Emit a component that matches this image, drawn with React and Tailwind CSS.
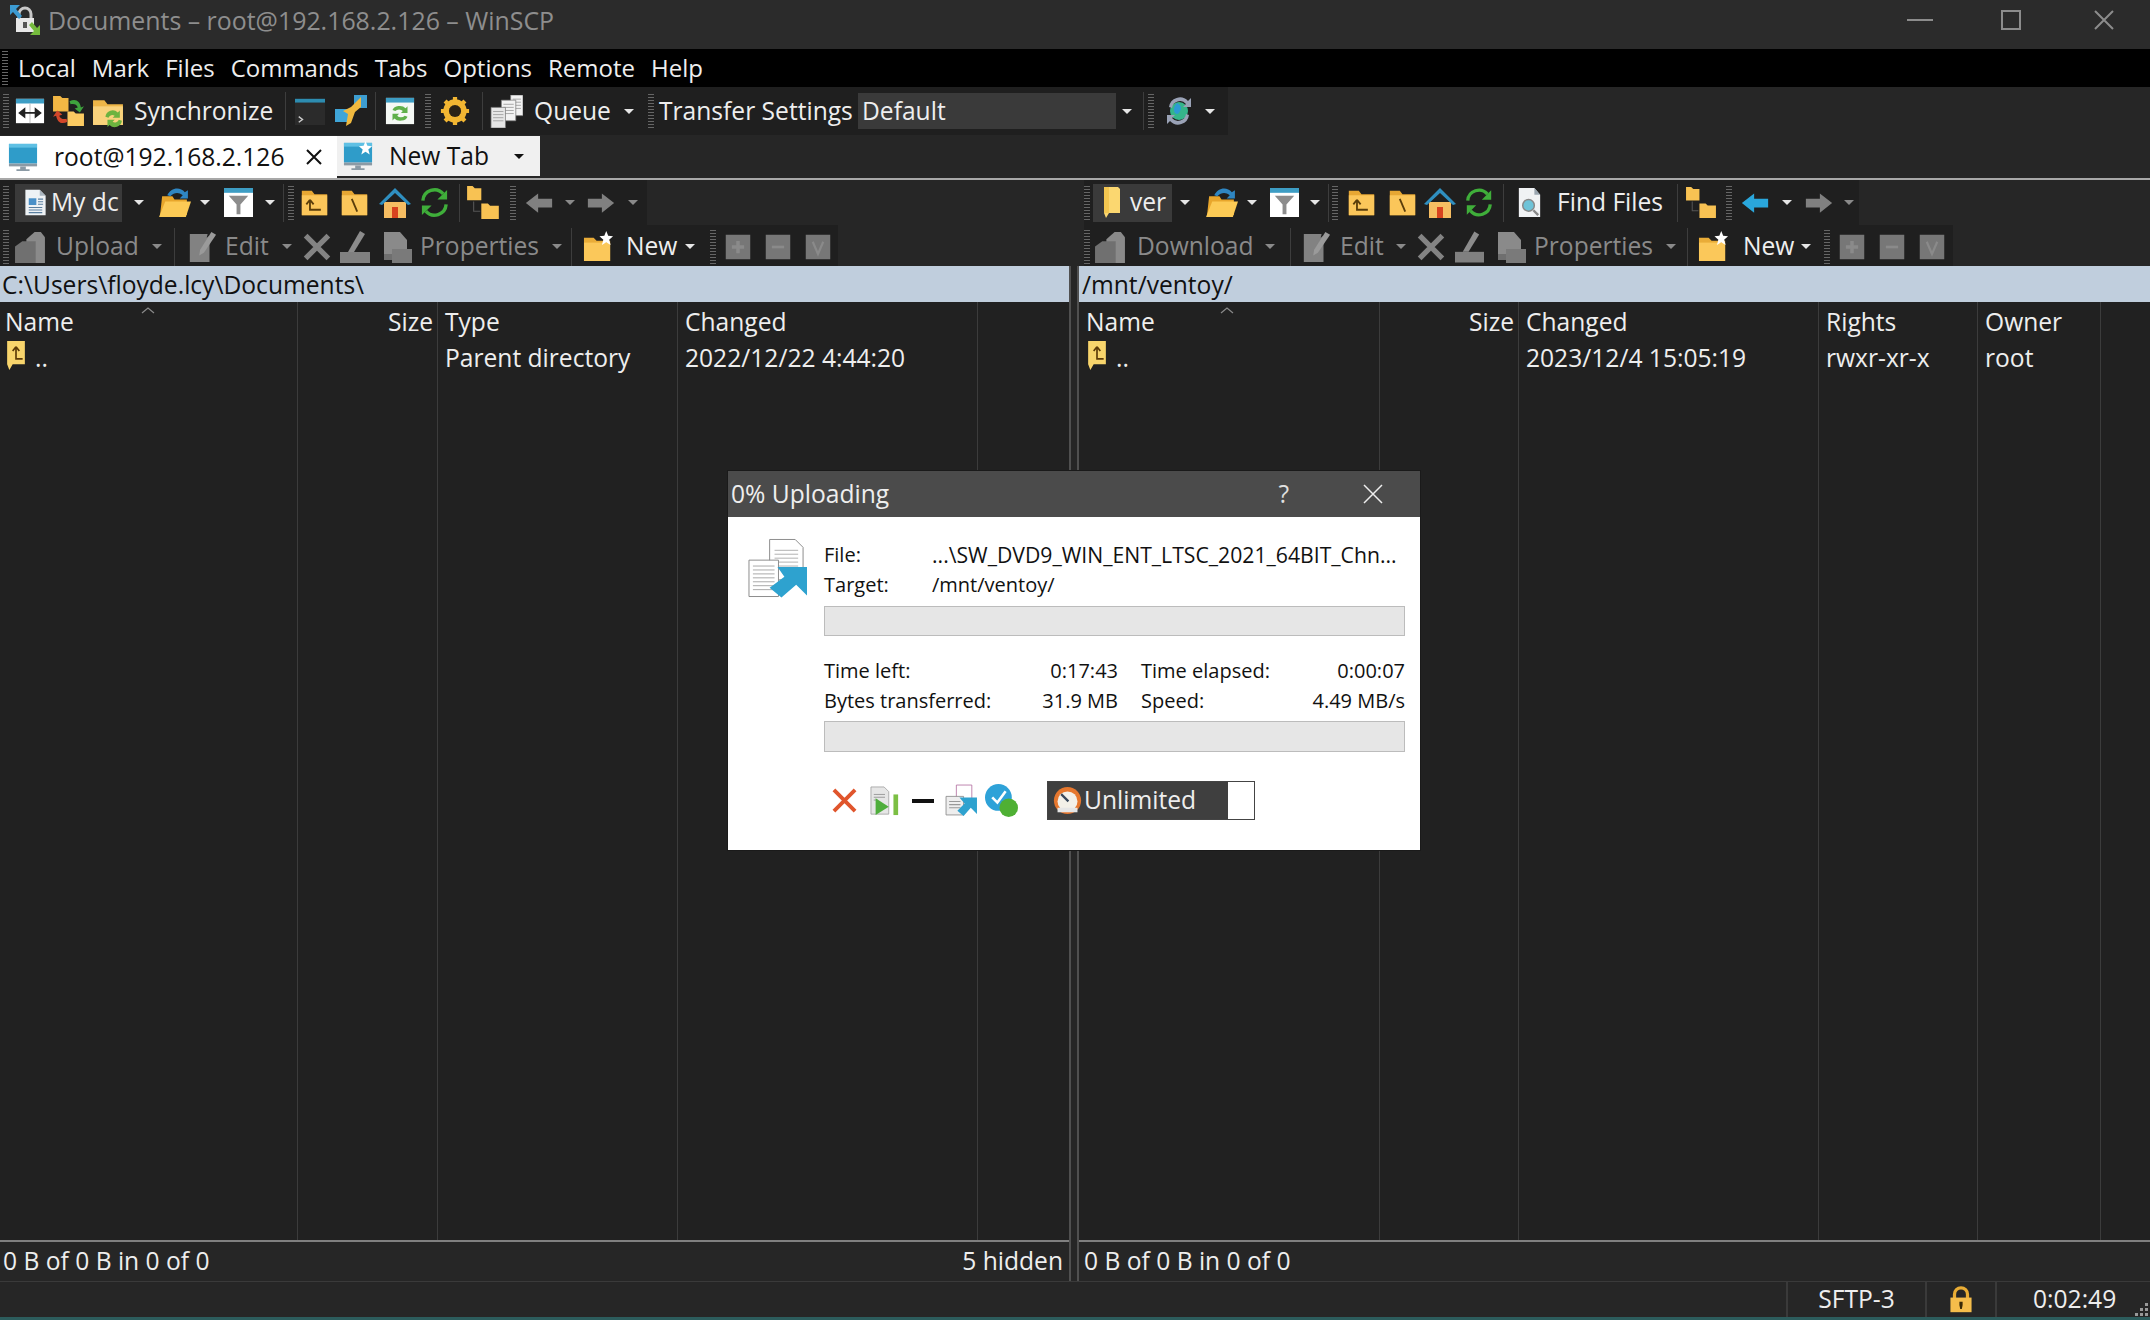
import React from "react";

const Svg = ({ className = "", children }) => (
  <svg viewBox="0 0 32 32" className={`shrink-0 ${className}`}>{children}</svg>
);

const CompareIcon = ({ className }) => (
  <Svg className={className}>
    <path d="M1 3h30v26H1z" fill="#fff" />
    <path d="M1 3h30v5H1z" fill="#3d9dc4" />
    <path d="M16 8v21" stroke="#bbb" />
    <path d="M5 18h22M5 18l5-4v8zM27 18l-5-4v8z" stroke="#222" strokeWidth="2" fill="#222" />
  </Svg>
);

const SyncFoldersIcon = ({ className }) => (
  <Svg className={className}>
    <path d="M1 1h7l2 2h6v13H1z" fill="#f2b744" />
    <path d="M15 16h6l2 2h8v12H15z" fill="#fbcb62" />
    <path d="M17 6c6-3 10 0 11 6l3-1-4 6-5-4 3-1c-1-3-4-4-7-3z" fill="#3ea33d" />
    <path d="M15 26c-6 3-10 0-11-6l-3 1 4-6 5 4-3 1c1 3 4 4 7 3z" fill="#d2472a" />
  </Svg>
);

const FolderSyncIcon = ({ className }) => (
  <Svg className={className}>
    <path d="M1 5h11l3 4h15v20H1z" fill="#eeb648" />
    <path d="M1 11h29v18H1z" fill="#f9d27c" />
    <path d="M13 21a7 7 0 0 1 12-4l2-2v7h-7l2-2a4 4 0 0 0-6 2zM29 25a7 7 0 0 1-12 4l-2 2v-7h7l-2 2a4 4 0 0 0 6-2z" fill="#6cb33f" />
  </Svg>
);

const TerminalIcon = ({ className }) => (
  <Svg className={className}>
    <path d="M0 3h32v28H0z" fill="#2b2b2b" />
    <path d="M0 3h32v4H0z" fill="#2d8cb0" />
    <path d="M4 22l4 3-4 3" stroke="#ccc" strokeWidth="1.5" fill="none" />
  </Svg>
);

const PuttyIcon = ({ className }) => (
  <Svg className={className}>
    <path d="M19 0h13v13H19z" fill="#3d9dd0" />
    <path d="M0 14h14v13H0z" fill="#3fa5d8" />
    <path d="M26 2L16 12l-8 4 5 3-2 12 5-3 4-11 6-5z" fill="#f0b93f" />
  </Svg>
);

const RefreshWinIcon = ({ className }) => (
  <Svg className={className}>
    <path d="M1 2h30v28H1z" fill="#f4f8f4" />
    <path d="M1 2h30v5H1z" fill="#3d9dc4" />
    <path d="M8 15a8 6 0 0 1 14-2l2-2v7h-7l2-2a5 4 0 0 0-8 0zM24 22a8 6 0 0 1-14 2l-2 2v-7h7l-2 2a5 4 0 0 0 8 0z" fill="#5fb04a" />
  </Svg>
);

const GearIcon = ({ className }) => (
  <Svg className={className}>
    <path d="M16 1v30M1 16h30M5.400 5.400l21.200 21.200M26.600 5.400L5.400 26.600" stroke="#f2b632" strokeWidth="4.500" />
    <circle cx="16" cy="16" r="9.500" fill="none" stroke="#f2b632" strokeWidth="6" />
    <circle cx="16" cy="16" r="6.500" fill="#2a2216" />
  </Svg>
);

const Page = ({ x, y, w, h, fill = "#f2f2f2" }) => (
  <g>
    <path d={`M${x} ${y}h${w}v${h}h${-w}z`} fill={fill} stroke="#777" strokeWidth=".7" />
    <path d={`M${x + 2} ${y + 4}h${w - 4}M${x + 2} ${y + 7}h${w - 4}M${x + 2} ${y + 10}h${w - 4}M${x + 2} ${y + 13}h${w - 4}`} stroke="#999" strokeWidth=".8" />
  </g>
);

const QueueIcon = ({ className }) => (
  <Svg className={className}>
    <Page x={20} y={0} w={12} h={20} />
    <Page x={11} y={5} w={14} h={20} />
    <Page x={1} y={12} w={14} h={20} fill="#e6e6e6" />
  </Svg>
);

const GlobeIcon = ({ className }) => (
  <Svg className={className}>
    <circle cx="16" cy="16" r="9" fill="#35b58a" />
    <path d="M14 8c4 2 5 5 3 8-1 3-3 4-5 2-2-3-1-7 2-10z" fill="#2d9ad4" />
    <path d="M6 12A11 11 0 0 1 25 6l3-3v9h-8l3-3A8 8 0 0 0 9 13z" fill="#9aa2b6" />
    <path d="M26 20A11 11 0 0 1 7 26l-3 3v-9h8l-3 3a8 8 0 0 0 14-4z" fill="#9aa2b6" />
  </Svg>
);

const MonitorIcon = ({ className, star }) => (
  <Svg className={className}>
    <path d="M1 2h30v21H1z" fill="#2f9cc9" />
    <path d="M1 2h30v4H1z" fill="#5fc0e4" />
    <path d="M1 23h30v3H1z" fill="#8b9aa5" />
    <path d="M13 26h6v3h4v2H9v-2h4z" fill="#8b9aa5" />
    {star && <path d="M24 0l2 5 5 .5-4 3.500 1.500 5.500L24 11.500 19.500 14.500 21 9l-4-3.500 5-.5z" fill="#fff" />}
  </Svg>
);

const DocIcon = ({ className }) => (
  <Svg className={className}>
    <path d="M4 1h17l7 7v23H4z" fill="#eef2f5" />
    <path d="M21 1l7 7h-7z" fill="#aab6c0" />
    <path d="M8 11h9v8H8z" fill="#4a90c8" />
    <path d="M8 22h16M8 25h16M8 28h16M19 12h6M19 15h6M19 18h6" stroke="#5a7fa0" strokeWidth="1.2" />
  </Svg>
);

const FolderOpenIcon = ({ className }) => (
  <Svg className={className}>
    <path d="M4 10h10l2 3h12v15H2z" fill="#e8a62c" />
    <path d="M7 15h25l-5 15H1z" fill="#fcca55" />
    <path d="M9 9c3-7 12-9 17-3l3-2v8h-8l3-3c-4-3-8-3-12 1z" fill="#2f86c2" />
  </Svg>
);

const FilterIcon = ({ className }) => (
  <Svg className={className}>
    <path d="M1 1h30v30H1z" fill="#fff" />
    <path d="M1 1h30v5H1z" fill="#3d9dc4" />
    <path d="M6 9h20l-8 9v10h-4V18z" fill="#8c8c8c" />
  </Svg>
);

const FolderUpIcon = ({ className }) => (
  <Svg className={className}>
    <path d="M2 3h11l3 4h14v23H2z" fill="#e7a733" />
    <path d="M2 8h28v22H2z" fill="#fbc65a" />
    <path d="M11 13v11h12M11 13l-4 5M11 13l4 5" stroke="#5a3d0a" strokeWidth="2" fill="none" />
  </Svg>
);

const FolderRootIcon = ({ className }) => (
  <Svg className={className}>
    <path d="M2 3h11l3 4h14v23H2z" fill="#e7a733" />
    <path d="M2 8h28v22H2z" fill="#fbc65a" />
    <path d="M13 12l6 14" stroke="#5a3d0a" strokeWidth="2" />
  </Svg>
);

const HomeIcon = ({ className }) => (
  <Svg className={className}>
    <path d="M5 15h22v16H5z" fill="#f6bd62" />
    <path d="M16 1L0 17l3 1L16 6l13 12 3-1z" fill="#2f8fc0" />
    <path d="M13 20h6v11h-6z" fill="#d8421f" />
  </Svg>
);

const RefreshIcon = ({ className }) => (
  <Svg className={className}>
    <path d="M4 14A12 12 0 0 1 25 7" stroke="#3fae3a" strokeWidth="3.500" fill="none" />
    <path d="M28 18A12 12 0 0 1 7 25" stroke="#3fae3a" strokeWidth="3.500" fill="none" />
    <path d="M29 3v10H19zM3 29V19h10z" fill="#3fae3a" />
  </Svg>
);

const TreeIcon = ({ className }) => (
  <Svg className={className}>
    <path d="M1 1h5l2 2h6v11H1z" fill="#f8c253" />
    <path d="M14 17h6l2 2h8v12H14z" fill="#f8c253" />
    <path d="M7 15v9h6" stroke="#555" strokeWidth="1" fill="none" />
  </Svg>
);

const ArrowLeft = ({ className, fill = "#808080" }) => (
  <Svg className={className}>
    <path d="M1 16L15 5v6h16v10H15v6z" fill={fill} />
  </Svg>
);

const ArrowRight = ({ className, fill = "#808080" }) => (
  <Svg className={className}>
    <path d="M31 16L17 5v6H1v10h16v6z" fill={fill} />
  </Svg>
);

const CopyGrayIcon = ({ className }) => (
  <Svg className={className}>
    <path d="M12 9l8-7h6l4 5v25H12z" fill="#8a8a8a" />
    <path d="M1 16l7-5h13v21H1z" fill="#707070" />
  </Svg>
);

const EditGrayIcon = ({ className }) => (
  <Svg className={className}>
    <path d="M3 2h19l-1 4 3-2v28H3z" fill="#828282" />
    <path d="M26 0l5 3-13 19-5 3 1-6z" fill="#9a9a9a" />
  </Svg>
);

const DeleteGrayIcon = ({ className }) => (
  <Svg className={className}>
    <path d="M3 3l26 26M29 3L3 29" stroke="#838383" strokeWidth="6" />
  </Svg>
);

const RenameGrayIcon = ({ className }) => (
  <Svg className={className}>
    <path d="M1 21h30v11H1z" fill="#808080" />
    <path d="M21 0l5 3-11 18h-6z" fill="#8c8c8c" />
  </Svg>
);

const PropsGrayIcon = ({ className }) => (
  <Svg className={className}>
    <path d="M2 1h16l7 8v14H2z" fill="#8a8a8a" />
    <path d="M10 18h20v14H10z" fill="#7a7a7a" />
    <path d="M2 23h8v6H2z" fill="#6f6f6f" />
  </Svg>
);

const NewFolderIcon = ({ className }) => (
  <Svg className={className}>
    <path d="M1 7h10l3 3h14v21H1z" fill="#e9ac38" />
    <path d="M1 12h27v19H1z" fill="#fbc85a" />
    <path d="M24 0l2 5 5 .5-4 3.500 1.500 5.500L24 11.500 19.500 14.500 21 9l-4-3.500 5-.5z" fill="#fff" />
  </Svg>
);

const SquareGray = ({ className, mark }) => (
  <Svg className={className}>
    <path d="M2 2h28v28H2z" fill="#777" />
    {mark === "plus" && <path d="M16 9v14M9 16h14" stroke="#8a8a8a" strokeWidth="4" />}
    {mark === "minus" && <path d="M9 16h14" stroke="#8a8a8a" strokeWidth="3" />}
    {mark === "check" && <path d="M10 10l6 14 6-14" stroke="#8a8a8a" strokeWidth="2.500" fill="none" />}
  </Svg>
);

const ShortcutFolder = ({ className }) => (
  <svg viewBox="0 0 22 32" className={`shrink-0 ${className}`}>
    <path d="M2 0h14l2 2v24H7l-3 5-2-5z" fill="#fbd770" />
    <path d="M2 0h5v26H2z" fill="#f3c650" />
  </svg>
);

const ParentIcon = ({ className }) => (
  <svg viewBox="0 0 18 28" className={`shrink-0 ${className}`}>
    <path d="M1 1h16v21H6l-3 5-2-5z" fill="#f8d56c" />
    <path d="M9 6v11h6M9 6L6 10M9 6l3 4" stroke="#5b3a08" strokeWidth="1.500" fill="none" />
  </svg>
);

const FindIcon = ({ className }) => (
  <Svg className={className}>
    <path d="M5 1h16l6 7v23H5z" fill="#f0f2f4" />
    <path d="M21 1l6 7h-6z" fill="#9aa6b0" />
    <circle cx="15" cy="19" r="6" fill="#6ec3d8" stroke="#888" strokeWidth="1.500" />
    <path d="M20 24l5 5" stroke="#888" strokeWidth="2.500" />
  </Svg>
);

const TransferIcon = ({ className }) => (
  <svg viewBox="0 0 60 60" className={`shrink-0 ${className}`}>
    <path d="M22 1h26l8 8v33H22z" fill="#fff" stroke="#8c8c8c" />
    <path d="M27 12h24M27 16h24M27 20h24M27 24h24M27 28h24" stroke="#b0b0b0" />
    <path d="M1 22h30v37H1z" fill="#fff" stroke="#8c8c8c" />
    <path d="M5 28h22M5 32h22M5 36h22M5 40h22M5 44h22M5 48h22M5 52h22" stroke="#a8a8a8" />
    <path d="M30 29h30v29L49 47 34 60 22 50 37 39z" fill="#2ea2cf" />
  </svg>
);

const PlayDocIcon = ({ className }) => (
  <Svg className={className}>
    <path d="M1 1h14l5 5v24H1z" fill="#e6e6e6" stroke="#999" strokeWidth=".8" />
    <path d="M4 9h12M4 12h12M4 15h4" stroke="#999" />
    <path d="M6 13l14 9-14 9z" fill="#4fae3c" />
    <path d="M25 9h5v22h-5z" fill="#7cbf44" />
  </Svg>
);

const DocsArrowIcon = ({ className }) => (
  <Svg className={className}>
    <path d="M11 1h15v19H11z" fill="#fff" stroke="#b36fa0" strokeWidth=".8" />
    <path d="M1 12h17v18H1z" fill="#eee" stroke="#888" strokeWidth=".8" />
    <path d="M4 17h11M4 20h11M4 23h11" stroke="#999" />
    <path d="M14 13h17v16l-6-6-7 8-6-5 7-7z" fill="#2ea2cf" />
  </Svg>
);

const CheckBadgeIcon = ({ className }) => (
  <Svg className={className}>
    <circle cx="13" cy="13" r="13" fill="#2ea2d8" />
    <path d="M7 13l5 5 8-11" stroke="#fff" strokeWidth="2.500" fill="none" />
    <circle cx="23" cy="23" r="9" fill="#4fb034" />
  </Svg>
);

const SpeedIcon = ({ className }) => (
  <Svg className={className}>
    <circle cx="16" cy="16" r="15" fill="#e6772e" />
    <circle cx="16" cy="17" r="11" fill="#f3f0e8" />
    <path d="M9 9l8 8" stroke="#37465a" strokeWidth="2.500" />
    <path d="M5 24h22v5H5z" fill="#e6e6e6" />
  </Svg>
);

const LockIcon = ({ className }) => (
  <Svg className={className}>
    <path d="M8 14V9a8 8 0 0 1 16 0v5" stroke="#e9ad35" strokeWidth="4" fill="none" />
    <path d="M3 13h26v18H3z" fill="#f5bd4b" />
    <path d="M14 18h4v4l-1 5h-2l-1-5z" fill="#3a2a08" />
  </Svg>
);

const AppIcon = ({ className }) => (
  <svg viewBox="0 0 34 34" className={`shrink-0 ${className}`}>
    <path d="M11 15v-4a6 6 0 0 1 12 0v4" stroke="#c8c8c8" strokeWidth="3" fill="none" />
    <path d="M8 15h18v14H8z" fill="#e8e8e8" />
    <path d="M15 19h4v6h-4z" fill="#555" />
    <path d="M2 2h10L8 6l6 7-3 3-6-7-3 3z" fill="#3c9bd2" />
    <path d="M32 32H22l4-4-5-6 3-3 5 6 3-3z" fill="#75bb3d" />
  </svg>
);

const Grip = ({ className = "" }) => (
  <div className={`w-[6px] h-[34px] shrink-0 bg-[repeating-linear-gradient(#666_0_1px,transparent_1px_3px)] ${className}`} />
);

const Sep = ({ className = "" }) => (
  <div className={`w-[1px] h-[38px] shrink-0 bg-[#3d3d3d] ${className}`} />
);

const Caret = ({ className = "", color = "border-t-[#e6e6e6]" }) => (
  <div className={`shrink-0 w-0 h-0 border-x-[5px] border-x-transparent border-t-[5px] ${color} ${className}`} />
);

const DimCaret = ({ className = "" }) => <Caret className={className} color="border-t-[#8a8a8a]" />;

const Label = ({ className = "", children }) => (
  <span className={`shrink-0 whitespace-nowrap ${className}`}>{children}</span>
);

const Row = ({ className = "", children }) => (
  <div className={`flex items-center bg-[#1f1f1f] ${className}`}>{children}</div>
);

function LeftBars() {
  return (
    <>
      <Row className="h-[45px] w-[647px]">
        <Grip className="ml-[3px]" />
        <div className="ml-[6px] flex items-center w-[107px] h-[38px] bg-[#3a3a3a] overflow-hidden">
          <DocIcon className="ml-[7px] w-[27px] h-[31px]" />
          <Label className="ml-[2px]">My dc</Label>
        </div>
        <Caret className="ml-[12px]" />
        <FolderOpenIcon className="ml-[14px] w-[33px] h-[33px]" />
        <Caret className="ml-[9px]" />
        <FilterIcon className="ml-[13px] w-[31px] h-[31px]" />
        <Caret className="ml-[11px]" />
        <Sep className="ml-[8px]" />
        <Grip className="ml-[4px]" />
        <FolderUpIcon className="ml-[6px] w-[29px] h-[29px]" />
        <FolderRootIcon className="ml-[11px] w-[29px] h-[29px]" />
        <HomeIcon className="ml-[10px] w-[32px] h-[32px]" />
        <RefreshIcon className="ml-[8px] w-[31px] h-[33px]" />
        <Sep className="ml-[9px]" />
        <TreeIcon className="ml-[6px] w-[35px] h-[35px]" />
        <Grip className="ml-[9px]" />
        <ArrowLeft className="ml-[7px] w-[32px] h-[28px]" />
        <DimCaret className="ml-[10px]" />
        <ArrowRight className="ml-[10px] w-[32px] h-[28px]" />
        <DimCaret className="ml-[11px]" />
      </Row>
      <Row className="h-[41px] w-[838px] pt-[2px]">
        <Grip className="ml-[3px]" />
        <CopyGrayIcon className="ml-[5px] w-[33px] h-[33px]" />
        <Label className="ml-[9px] w-[84px] text-[#8a8a8a]">Upload</Label>
        <DimCaret className="ml-[12px]" />
        <Sep className="ml-[12px]" />
        <EditGrayIcon className="ml-[12px] w-[30px] h-[32px]" />
        <Label className="ml-[8px] w-[44px] text-[#8a8a8a]">Edit</Label>
        <DimCaret className="ml-[13px]" />
        <DeleteGrayIcon className="ml-[11px] w-[28px] h-[28px]" />
        <RenameGrayIcon className="ml-[8px] w-[32px] h-[32px]" />
        <PropsGrayIcon className="ml-[11px] w-[32px] h-[32px]" />
        <Label className="ml-[6px] w-[116px] text-[#8a8a8a]">Properties</Label>
        <DimCaret className="ml-[16px]" />
        <Sep className="ml-[9px]" />
        <NewFolderIcon className="ml-[11px] w-[31px] h-[33px]" />
        <Label className="ml-[12px] w-[50px]">New</Label>
        <Caret className="ml-[9px]" />
        <Grip className="ml-[15px]" />
        <SquareGray mark="plus" className="ml-[8px] w-[28px] h-[28px]" />
        <SquareGray mark="minus" className="ml-[12px] w-[28px] h-[28px]" />
        <SquareGray mark="check" className="ml-[12px] w-[28px] h-[28px]" />
      </Row>
    </>
  );
}

function RightBars() {
  return (
    <>
      <Row className="h-[45px] w-[775px] ml-[5px]">
        <Grip />
        <div className="ml-[3px] flex items-center w-[79px] h-[38px] bg-[#3a3a3a]">
          <ShortcutFolder className="ml-[9px] w-[22px] h-[32px]" />
          <Label className="ml-[6px]">ver</Label>
        </div>
        <Caret className="ml-[8px]" />
        <FolderOpenIcon className="ml-[15px] w-[33px] h-[33px]" />
        <Caret className="ml-[9px]" />
        <FilterIcon className="ml-[12px] w-[31px] h-[31px]" />
        <Caret className="ml-[10px]" />
        <Sep className="ml-[8px]" />
        <Grip className="ml-[3px]" />
        <FolderUpIcon className="ml-[9px] w-[29px] h-[29px]" />
        <FolderRootIcon className="ml-[12px] w-[29px] h-[29px]" />
        <HomeIcon className="ml-[7px] w-[32px] h-[32px]" />
        <RefreshIcon className="ml-[8px] w-[30px] h-[33px]" />
        <Sep className="ml-[9px]" />
        <FindIcon className="ml-[10px] w-[31px] h-[33px]" />
        <Label className="ml-[12px] w-[108px]">Find Files</Label>
        <Sep className="ml-[12px]" />
        <TreeIcon className="ml-[7px] w-[33px] h-[35px]" />
        <Grip className="ml-[8px]" />
        <ArrowLeft className="ml-[7px] w-[32px] h-[28px]" fill="#2aa7dc" />
        <Caret className="ml-[11px]" />
        <ArrowRight className="ml-[11px] w-[32px] h-[28px]" />
        <DimCaret className="ml-[9px]" />
      </Row>
      <Row className="h-[41px] w-[869px] ml-[5px] pt-[2px]">
        <Grip />
        <CopyGrayIcon className="ml-[4px] w-[33px] h-[33px]" />
        <Label className="ml-[10px] w-[116px] text-[#8a8a8a]">Download</Label>
        <DimCaret className="ml-[12px]" />
        <Sep className="ml-[15px]" />
        <EditGrayIcon className="ml-[10px] w-[30px] h-[32px]" />
        <Label className="ml-[9px] w-[44px] text-[#8a8a8a]">Edit</Label>
        <DimCaret className="ml-[12px]" />
        <DeleteGrayIcon className="ml-[11px] w-[28px] h-[28px]" />
        <RenameGrayIcon className="ml-[9px] w-[31px] h-[32px]" />
        <PropsGrayIcon className="ml-[11px] w-[32px] h-[32px]" />
        <Label className="ml-[6px] w-[116px] text-[#8a8a8a]">Properties</Label>
        <DimCaret className="ml-[16px]" />
        <Sep className="ml-[11px]" />
        <NewFolderIcon className="ml-[10px] w-[31px] h-[33px]" />
        <Label className="ml-[14px] w-[50px]">New</Label>
        <Caret className="ml-[8px]" />
        <Grip className="ml-[13px]" />
        <SquareGray mark="plus" className="ml-[8px] w-[28px] h-[28px]" />
        <SquareGray mark="minus" className="ml-[12px] w-[28px] h-[28px]" />
        <SquareGray mark="check" className="ml-[12px] w-[28px] h-[28px]" />
      </Row>
    </>
  );
}

function Column({ className = "", inset = "pl-[6px]", title, right, value, icon, sort }) {
  return (
    <div className={`relative shrink-0 h-full border-r border-[#3c3c3c] ${className}`}>
      {sort && (
        <svg viewBox="0 0 14 7" className="absolute left-[141px] top-[5px] w-[14px] h-[7px]">
          <path d="M1 6l6-5 6 5" stroke="#8a8a8a" strokeWidth="1.200" fill="none" />
        </svg>
      )}
      <div className={`h-[38px] pt-[3px] flex items-center whitespace-nowrap ${right ? "justify-end pr-[4px]" : inset}`}>{title}</div>
      <div className={`h-[34px] pt-[2px] flex items-center whitespace-nowrap ${inset}`}>
        {icon && <ParentIcon className="ml-[1px] mt-[-6px] mr-[9px] w-[20px] h-[31px]" />}
        {value}
      </div>
    </div>
  );
}

function StatusLine({ className = "px-[3px]", children }) {
  return (
    <div className={`h-[41px] shrink-0 flex items-center justify-between border-t-2 border-[#808080] ${className}`}>
      {children}
    </div>
  );
}

export default function App() {
  return (
    <div className="relative w-[2150px] h-[1320px] overflow-hidden flex flex-col bg-[#262626] text-[#eeeeee] text-[24.6px] leading-none font-['Open_Sans',sans-serif]">
      {/* title bar */}
      <div className="h-[49px] shrink-0 flex items-center pb-[9px] bg-[#2b2b2b] text-[#8e8e8e]">
        <AppIcon className="ml-[8px] w-[34px] h-[34px]" />
        <Label className="ml-[6px] text-[24.9px]">Documents – root@192.168.2.126 – WinSCP</Label>
        <div className="ml-auto flex items-center">
          <div className="w-[26px] h-[2px] bg-[#8c8c8c] mr-[68px]" />
          <div className="w-[20px] h-[20px] border-2 border-[#8c8c8c] mr-[73px]" />
          <svg viewBox="0 0 20 20" className="w-[20px] h-[20px] mr-[36px]">
            <path d="M1 1l18 18M19 1L1 19" stroke="#8c8c8c" strokeWidth="2" />
          </svg>
        </div>
      </div>

      {/* menu */}
      <div className="h-[38px] shrink-0 flex items-center bg-black gap-[16px] text-[24px]">
        <Grip className="ml-[2px] mr-[-6px] h-[22px] w-[5px]" />
        {["Local", "Mark", "Files", "Commands", "Tabs", "Options", "Remote", "Help"].map((m) => (
          <span key={m}>{m}</span>
        ))}
      </div>

      {/* main toolbar */}
      <Row className="h-[48px] shrink-0 w-[1228px]">
        <Grip className="ml-[3px]" />
        <CompareIcon className="ml-[6px] w-[30px] h-[30px]" />
        <SyncFoldersIcon className="ml-[7px] w-[33px] h-[33px]" />
        <FolderSyncIcon className="ml-[7px] w-[33px] h-[33px]" />
        <Label className="ml-[9px] w-[139px]">Synchronize</Label>
        <Sep className="ml-[12px]" />
        <TerminalIcon className="ml-[9px] w-[30px] h-[30px]" />
        <PuttyIcon className="ml-[10px] w-[32px] h-[36px]" />
        <Sep className="ml-[8px]" />
        <RefreshWinIcon className="ml-[9px] w-[30px] h-[30px]" />
        <Grip className="ml-[10px]" />
        <GearIcon className="ml-[9px] w-[30px] h-[30px]" />
        <Sep className="ml-[12px]" />
        <QueueIcon className="ml-[7px] w-[33px] h-[33px]" />
        <Label className="ml-[11px] w-[80px]">Queue</Label>
        <Caret className="ml-[10px]" />
        <Grip className="ml-[14px]" />
        <Label className="ml-[5px] w-[192px]">Transfer Settings</Label>
        <div className="ml-[7px] w-[258px] h-[36px] flex items-center bg-[#3a3a3a] pl-[4px]">Default</div>
        <Caret className="ml-[6px]" />
        <Sep className="ml-[11px]" />
        <Grip className="ml-[4px]" />
        <GlobeIcon className="ml-[9px] w-[32px] h-[32px]" />
        <Caret className="ml-[10px]" />
      </Row>

      {/* session tabs */}
      <div className="h-[45px] shrink-0 flex items-start border-b-2 border-[#a8a8a8] pt-[1px]">
        <div className="w-[337px] h-[42px] flex items-center bg-white text-[#111]">
          <MonitorIcon className="ml-[8px] w-[30px] h-[30px]" />
          <Label className="ml-[16px]">root@192.168.2.126</Label>
          <svg viewBox="0 0 16 16" className="ml-auto mr-[15px] w-[16px] h-[16px]">
            <path d="M1 1l14 14M15 1L1 15" stroke="#111" strokeWidth="2" />
          </svg>
        </div>
        <div className="w-[203px] h-[40px] flex items-center bg-[#f0f0f0] text-[#111]">
          <MonitorIcon star className="ml-[6px] w-[30px] h-[32px]" />
          <Label className="ml-[16px]">New Tab</Label>
          <Caret className="ml-auto mr-[16px]" color="border-t-[#111]" />
        </div>
      </div>

      {/* panels */}
      <div className="flex flex-1 min-h-0">
        <div className="w-[1069px] shrink-0 flex flex-col">
          <LeftBars />
          <div className="h-[36px] shrink-0 flex items-center bg-[#c0cedd] text-[#111] pl-[2px] pt-[2px]">C:\Users\floyde.lcy\Documents\</div>
          <div className="flex-1 min-h-0 flex bg-[#212121]">
            <Column className="w-[298px]" inset="pl-[5px]" title="Name" value=".." icon sort />
            <Column className="w-[140px]" title="Size" right />
            <Column className="w-[240px]" inset="pl-[7px]" title="Type" value="Parent directory" />
            <Column className="w-[300px]" inset="pl-[7px]" title="Changed" value="2022/12/22 4:44:20" />
            <div className="flex-1" />
          </div>
          <StatusLine>
            <span>0 B of 0 B in 0 of 0</span>
            <span className="pr-[3px]">5 hidden</span>
          </StatusLine>
        </div>
        <div className="w-[10px] shrink-0 pt-[86px]">
          <div className="h-full border-x-2 border-[#505050]" />
        </div>
        <div className="w-[1071px] shrink-0 flex flex-col">
          <RightBars />
          <div className="h-[36px] shrink-0 flex items-center bg-[#c0cedd] text-[#111] pl-[3px] pt-[2px]">/mnt/ventoy/</div>
          <div className="flex-1 min-h-0 flex bg-[#212121]">
            <Column className="w-[301px]" inset="pl-[7px]" title="Name" value=".." icon sort />
            <Column className="w-[139px]" title="Size" right />
            <Column className="w-[300px]" inset="pl-[7px]" title="Changed" value="2023/12/4 15:05:19" />
            <Column className="w-[159px]" inset="pl-[7px]" title="Rights" value="rwxr-xr-x" />
            <Column className="w-[123px]" inset="pl-[7px]" title="Owner" value="root" />
            <div className="flex-1" />
          </div>
          <StatusLine className="px-[5px]">
            <span>0 B of 0 B in 0 of 0</span>
          </StatusLine>
        </div>
      </div>

      {/* status bar */}
      <div className="h-[39px] shrink-0 flex border-t border-[#3a3a3a] border-b-[3px] border-b-[#2c5c5c]">
        <div className="ml-[1786px] w-[139px] border-l-2 border-[#3a3a3a] flex items-center justify-center">SFTP-3</div>
        <div className="w-[70px] border-l-2 border-[#3a3a3a] flex items-center justify-center">
          <LockIcon className="w-[26px] h-[28px]" />
        </div>
        <div className="flex-1 border-l-2 border-[#3a3a3a] flex items-center pl-[36px]">0:02:49</div>
      </div>
      <div className="absolute right-[2px] bottom-[4px] grid grid-cols-3 gap-[2px]">
        <span className="w-[3px] h-[3px]" />
        <span className="w-[3px] h-[3px]" />
        <span className="w-[3px] h-[3px] bg-[#999]" />
        <span className="w-[3px] h-[3px]" />
        <span className="w-[3px] h-[3px] bg-[#999]" />
        <span className="w-[3px] h-[3px] bg-[#999]" />
        <span className="w-[3px] h-[3px] bg-[#999]" />
        <span className="w-[3px] h-[3px] bg-[#999]" />
        <span className="w-[3px] h-[3px] bg-[#999]" />
      </div>

      {/* progress dialog */}
      <div className="absolute left-[727px] top-[470px] w-[694px] h-[381px] flex flex-col bg-white border border-[#1a1a1a] text-[#111] text-[20px]">
        <div className="h-[46px] shrink-0 flex items-center bg-[#4b4b4b] text-[#eeeeee] text-[24.6px] pl-[3px]">
          <span>0% Uploading</span>
          <span className="ml-auto mr-[74px] text-[#e0e0e0]">?</span>
          <svg viewBox="0 0 20 20" className="mr-[37px] w-[20px] h-[20px]">
            <path d="M1 1l18 18M19 1L1 19" stroke="#eeeeee" strokeWidth="1.500" />
          </svg>
        </div>
        <div className="flex flex-1 min-h-0">
          <TransferIcon className="ml-[20px] mt-[21px] w-[59px] h-[60px]" />
          <div className="ml-[17px] w-[581px] flex flex-col">
            <div className="mt-[23px] h-[30px] flex items-center">
              <span className="w-[108px]">File:</span>
              <span className="flex-1 whitespace-nowrap text-[21.2px]">...\SW_DVD9_WIN_ENT_LTSC_2021_64BIT_Chn...</span>
            </div>
            <div className="h-[30px] flex items-center">
              <span className="w-[108px]">Target:</span>
              <span>/mnt/ventoy/</span>
            </div>
            <div className="mt-[6px] h-[30px] bg-[#e6e6e6] border border-[#bcbcbc]" />
            <div className="mt-[20px] h-[30px] flex items-center">
              <span className="w-[170px] shrink-0">Time left:</span>
              <span className="w-[124px] shrink-0 text-right">0:17:43</span>
              <span className="ml-[23px] whitespace-nowrap">Time elapsed:</span>
              <span className="ml-auto">0:00:07</span>
            </div>
            <div className="h-[30px] flex items-center">
              <span className="w-[170px] shrink-0 whitespace-nowrap">Bytes transferred:</span>
              <span className="w-[124px] shrink-0 text-right">31.9 MB</span>
              <span className="ml-[23px]">Speed:</span>
              <span className="ml-auto">4.49 MB/s</span>
            </div>
            <div className="mt-[5px] h-[31px] bg-[#e6e6e6] border border-[#bcbcbc]" />
            <div className="mt-[29px] flex items-center">
              <svg viewBox="0 0 26 26" className="ml-[8px] w-[25px] h-[25px] shrink-0">
                <path d="M2 2l22 22M24 2L2 24" stroke="#e0552c" strokeWidth="4" />
              </svg>
              <PlayDocIcon className="ml-[13px] w-[30px] h-[32px]" />
              <div className="ml-[12px] w-[22px] h-[4px] bg-[#111] shrink-0" />
              <DocsArrowIcon className="ml-[11px] w-[33px] h-[33px]" />
              <CheckBadgeIcon className="ml-[7px] w-[33px] h-[33px]" />
              <div className="ml-[29px] w-[208px] h-[39px] flex border border-[#444] bg-white">
                <div className="w-[180px] flex items-center bg-[#3f3f3f] text-[#eeeeee] text-[24.6px]">
                  <SpeedIcon className="ml-[5px] w-[29px] h-[29px]" />
                  <span className="ml-[2px]">Unlimited</span>
                </div>
              </div>
            </div>
          </div>
        </div>
      </div>
    </div>
  );
}
